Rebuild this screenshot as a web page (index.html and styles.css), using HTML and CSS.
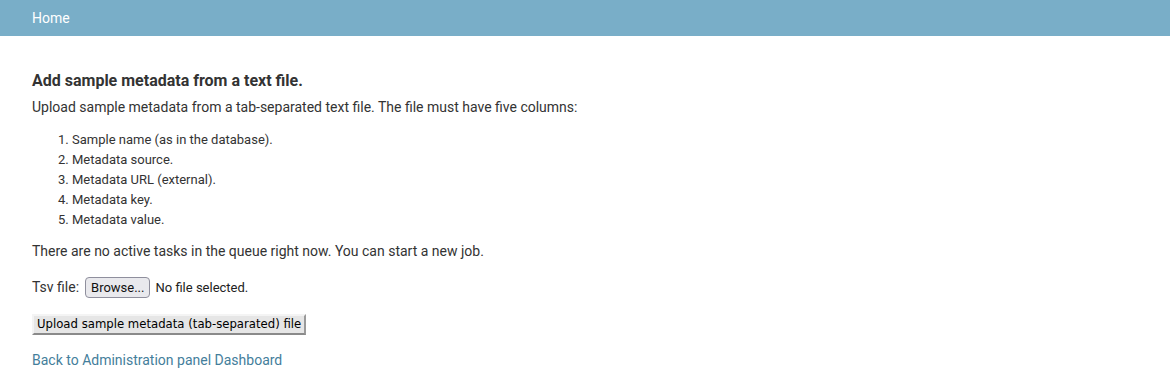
FILE: index.html
```html
<!DOCTYPE html>
<html>
<head>
<meta charset="utf-8">
<link rel="stylesheet" href="styles.css">
</head>
<body>
<div class="breadcrumbs"><a href="#">Home</a></div>
<main class="content">
  <h3 class="title">Add sample metadata from a text file.</h3>
  <p class="intro">Upload sample metadata from a tab-separated text file. The file must have five columns:</p>
  <ol class="cols">
    <li>Sample name (as in the database).</li>
    <li>Metadata source.</li>
    <li>Metadata URL (external).</li>
    <li>Metadata key.</li>
    <li>Metadata value.</li>
  </ol>
  <p class="status">There are no active tasks in the queue right now. You can start a new job.</p>
  <form class="upload">
    <div class="field">
      <label class="label">Tsv file:</label>
      <span class="browse">Browse...</span>
      <span class="nofile">No file selected.</span>
    </div>
    <div class="submit-row"><button type="button" class="submit">Upload sample metadata (tab-separated) file</button></div>
  </form>
  <a class="back" href="#">Back to Administration panel Dashboard</a>
</main>
</body>
</html>
```
FILE: styles.css
```css
* { box-sizing: border-box; }
html, body { margin: 0; padding: 0; background: #fff; }
body {
  font-family: Roboto, "Liberation Sans", sans-serif;
  color: #333;
  font-size: 14px;
}
.breadcrumbs {
  background: #79aec8;
  height: 36px;
  padding: 0 32px;
  display: flex;
  align-items: center;
  font-size: 14px;
}
.breadcrumbs a { color: #fff; text-decoration: none; }
.content {
  padding: 35px 32px 0;
  display: flex;
  flex-direction: column;
  align-items: flex-start;
}
.title {
  margin: 0;
  font-size: 16px;
  line-height: 20px;
  font-weight: 700;
  color: #333;
}
.intro {
  margin: 6px 0 0;
  line-height: 20px;
}
.cols {
  margin: 13px 0 0;
  padding-left: 40px;
  font-size: 13px;
  line-height: 20px;
}
.status { margin: 11px 0 0; line-height: 20px; }
.upload { margin-top: 16px; }
.field {
  display: flex;
  align-items: center;
  gap: 5px;
  height: 21px;
}
.label { font-size: 14px; margin-right: 1px; position: relative; top: -1px; }
.browse {
  font-size: 13px;
  color: #111;
  background: #e9e9ed;
  border: 1px solid #8f8f9d;
  border-radius: 4px;
  height: 21px;
  line-height: 19px;
  padding: 0 5px;
}
.nofile { font-size: 13px; color: #222; }
.submit-row { margin-top: 16px; }
.submit {
  font-family: "DejaVu Sans", sans-serif;
  font-size: 11.7px;
  color: #000;
  background: #e6e6e6;
  border: 2px solid;
  border-color: #f4f4f4 #9a9a9a #8a8a8a #f4f4f4;
  height: 21px;
  padding: 0 3px;
  line-height: 17px;
  margin: 0;
}
.back {
  margin-top: 15px;
  color: #447e9b;
  text-decoration: none;
  line-height: 20px;
  font-size: 14px;
}
```
